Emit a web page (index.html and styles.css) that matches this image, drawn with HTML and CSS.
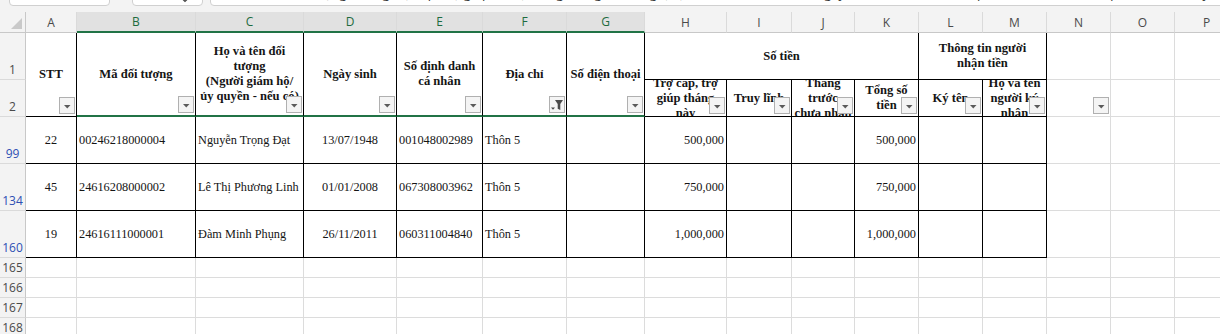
FILE: index.html
```html
<!doctype html>
<html>
<head>
  <meta charset="utf-8">
  <link rel="stylesheet" href="styles.css">
</head>
<body>
  <div class="toolbar">
    <div class="box namebox"></div>
    <div class="box fxbox">
      <svg width="8" height="6" viewBox="0 0 8 6"><path d="M1 1.5 L4 4.5 L7 1.5" fill="none" stroke="#444" stroke-width="1.2"/></svg>
    </div>
    <div class="box formula">Danh sách đối tượng hưởng trợ cấp, trợ giúp xã hội hàng tháng (theo Nghị định số 20/2021/NĐ-CP ngày 15/3/2021 của Chính phủ) - Thôn 5, chi trả qua tài khoản (kỳ tháng 10, 11 năm 2024)</div>
  </div>

  <div class="sheet">
    <div class="corner"><svg width="26" height="20" viewBox="0 0 26 20"><path d="M22 6 V17 H11 Z" fill="#c9c9c9"/></svg></div>
    <div class="colhead">A</div>
    <div class="colhead sel">B</div>
    <div class="colhead sel">C</div>
    <div class="colhead sel">D</div>
    <div class="colhead sel">E</div>
    <div class="colhead sel">F</div>
    <div class="colhead sel">G</div>
    <div class="colhead">H</div>
    <div class="colhead">I</div>
    <div class="colhead">J</div>
    <div class="colhead">K</div>
    <div class="colhead">L</div>
    <div class="colhead">M</div>
    <div class="colhead">N</div>
    <div class="colhead">O</div>
    <div class="colhead">P</div>

    <!-- row 1 -->
    <div class="rowhead">1</div>
    <div class="c t h r2"><span>STT</span><span class="drop"><svg width="14" height="15" viewBox="0 0 14 15"><path d="M4 7 H10.5 L7.25 10.5 Z" fill="#5a5a5a"/></svg></span></div>
    <div class="c t h r2 sb"><span>Mã đối tượng</span><span class="drop"><svg width="14" height="15" viewBox="0 0 14 15"><path d="M4 7 H10.5 L7.25 10.5 Z" fill="#5a5a5a"/></svg></span></div>
    <div class="c t h r2 sb"><span>Họ và tên đối<br>tượng<br>(Người giám hộ/<br>ủy quyền - nếu có)</span><span class="drop"><svg width="14" height="15" viewBox="0 0 14 15"><path d="M4 7 H10.5 L7.25 10.5 Z" fill="#5a5a5a"/></svg></span></div>
    <div class="c t h r2 sb"><span>Ngày sinh</span><span class="drop"><svg width="14" height="15" viewBox="0 0 14 15"><path d="M4 7 H10.5 L7.25 10.5 Z" fill="#5a5a5a"/></svg></span></div>
    <div class="c t h r2 sb"><span>Số định danh<br>cá nhân</span><span class="drop"><svg width="14" height="15" viewBox="0 0 14 15"><path d="M4 7 H10.5 L7.25 10.5 Z" fill="#5a5a5a"/></svg></span></div>
    <div class="c t h r2 sb"><span>Địa chỉ</span><span class="drop"><svg width="14" height="15" viewBox="0 0 14 15"><path d="M5 3 H13 L10.3 7 V13 L7.7 11.7 V7 Z" fill="#4a4a4a"/><path d="M1 10.5 H5 L3 12.7 Z" fill="#4a4a4a"/></svg></span></div>
    <div class="c t h r2 sb nw"><span>Số điện thoại</span><span class="drop"><svg width="14" height="15" viewBox="0 0 14 15"><path d="M4 7 H10.5 L7.25 10.5 Z" fill="#5a5a5a"/></svg></span></div>
    <div class="c t h s4"><span>Số tiền</span></div>
    <div class="c t h s2"><span>Thông tin người<br>nhận tiền</span></div>
    <div class="c"></div>
    <div class="c"></div>
    <div class="c"></div>

    <!-- row 2 -->
    <div class="rowhead">2</div>
    <div class="c t h"><span>Trợ cấp, trợ<br>giúp tháng<br>này</span><span class="drop"><svg width="14" height="15" viewBox="0 0 14 15"><path d="M4 7 H10.5 L7.25 10.5 Z" fill="#5a5a5a"/></svg></span></div>
    <div class="c t h nw"><span>Truy lĩnh</span><span class="drop"><svg width="14" height="15" viewBox="0 0 14 15"><path d="M4 7 H10.5 L7.25 10.5 Z" fill="#5a5a5a"/></svg></span></div>
    <div class="c t h"><span>Tháng<br>trước<br>chưa nhận</span><span class="drop"><svg width="14" height="15" viewBox="0 0 14 15"><path d="M4 7 H10.5 L7.25 10.5 Z" fill="#5a5a5a"/></svg></span></div>
    <div class="c t h"><span>Tổng số<br>tiền</span><span class="drop"><svg width="14" height="15" viewBox="0 0 14 15"><path d="M4 7 H10.5 L7.25 10.5 Z" fill="#5a5a5a"/></svg></span></div>
    <div class="c t h nw"><span>Ký tên</span><span class="drop"><svg width="14" height="15" viewBox="0 0 14 15"><path d="M4 7 H10.5 L7.25 10.5 Z" fill="#5a5a5a"/></svg></span></div>
    <div class="c t h"><span>Họ và tên<br>người ký<br>nhận</span><span class="drop"><svg width="14" height="15" viewBox="0 0 14 15"><path d="M4 7 H10.5 L7.25 10.5 Z" fill="#5a5a5a"/></svg></span></div>
    <div class="c"><span class="drop"><svg width="14" height="15" viewBox="0 0 14 15"><path d="M4 7 H10.5 L7.25 10.5 Z" fill="#5a5a5a"/></svg></span></div>
    <div class="c"></div>
    <div class="c"></div>

    <!-- row 99 -->
    <div class="rowhead filt">99</div>
    <div class="c t ctr">22</div>
    <div class="c t">00246218000004</div>
    <div class="c t">Nguyễn Trọng Đạt</div>
    <div class="c t ctr">13/07/1948</div>
    <div class="c t">001048002989</div>
    <div class="c t">Thôn 5</div>
    <div class="c t"></div>
    <div class="c t num">500,000</div>
    <div class="c t"></div>
    <div class="c t"></div>
    <div class="c t num">500,000</div>
    <div class="c t"></div>
    <div class="c t"></div>
    <div class="c"></div>
    <div class="c"></div>
    <div class="c"></div>

    <!-- row 134 -->
    <div class="rowhead filt">134</div>
    <div class="c t ctr">45</div>
    <div class="c t">24616208000002</div>
    <div class="c t">Lê Thị Phương Linh</div>
    <div class="c t ctr">01/01/2008</div>
    <div class="c t">067308003962</div>
    <div class="c t">Thôn 5</div>
    <div class="c t"></div>
    <div class="c t num">750,000</div>
    <div class="c t"></div>
    <div class="c t"></div>
    <div class="c t num">750,000</div>
    <div class="c t"></div>
    <div class="c t"></div>
    <div class="c"></div>
    <div class="c"></div>
    <div class="c"></div>

    <!-- row 160 -->
    <div class="rowhead filt">160</div>
    <div class="c t ctr">19</div>
    <div class="c t">24616111000001</div>
    <div class="c t">Đàm Minh Phụng</div>
    <div class="c t ctr">26/11/2011</div>
    <div class="c t">060311004840</div>
    <div class="c t">Thôn 5</div>
    <div class="c t"></div>
    <div class="c t num">1,000,000</div>
    <div class="c t"></div>
    <div class="c t"></div>
    <div class="c t num">1,000,000</div>
    <div class="c t"></div>
    <div class="c t"></div>
    <div class="c"></div>
    <div class="c"></div>
    <div class="c"></div>

    <!-- empty rows -->
    <div class="rowhead">165</div>
    <div class="c"></div><div class="c"></div><div class="c"></div><div class="c"></div>
    <div class="c"></div><div class="c"></div><div class="c"></div><div class="c"></div>
    <div class="c"></div><div class="c"></div><div class="c"></div><div class="c"></div>
    <div class="c"></div><div class="c"></div><div class="c"></div><div class="c"></div>

    <div class="rowhead">166</div>
    <div class="c"></div><div class="c"></div><div class="c"></div><div class="c"></div>
    <div class="c"></div><div class="c"></div><div class="c"></div><div class="c"></div>
    <div class="c"></div><div class="c"></div><div class="c"></div><div class="c"></div>
    <div class="c"></div><div class="c"></div><div class="c"></div><div class="c"></div>

    <div class="rowhead">167</div>
    <div class="c"></div><div class="c"></div><div class="c"></div><div class="c"></div>
    <div class="c"></div><div class="c"></div><div class="c"></div><div class="c"></div>
    <div class="c"></div><div class="c"></div><div class="c"></div><div class="c"></div>
    <div class="c"></div><div class="c"></div><div class="c"></div><div class="c"></div>

    <div class="rowhead">168</div>
    <div class="c"></div><div class="c"></div><div class="c"></div><div class="c"></div>
    <div class="c"></div><div class="c"></div><div class="c"></div><div class="c"></div>
    <div class="c"></div><div class="c"></div><div class="c"></div><div class="c"></div>
    <div class="c"></div><div class="c"></div><div class="c"></div><div class="c"></div>
  </div>
</body>
</html>
```

FILE: styles.css
```css
html, body {
  height: 100%;
  margin: 0;
  overflow: hidden;
  background: #fff;
  font-family: "Liberation Serif", serif;
}

/* formula bar, only its lower edge is on screen */
.toolbar {
  display: flex;
  align-items: flex-end;
  height: 12px;
  overflow: hidden;
  background: #f3f3f3;
}
.box {
  box-sizing: border-box;
  height: 22px;
  margin-bottom: 6px;
  background: #fff;
  border: 1px solid #d0d0d0;
  border-radius: 4px;
}
.namebox {
  margin-left: 9px;
  width: 101px;
}
.fxbox {
  display: flex;
  justify-content: flex-end;
  align-items: flex-end;
  margin-left: 22px;
  width: 71px;
  padding: 0 13px 2px 0;
}
.formula {
  flex: 1;
  margin: 0 -40px 6px 7px;
  padding: 0 0 0 10px;
  overflow: hidden;
  white-space: nowrap;
  font: 13px/17px "Open Sans", sans-serif;
  color: #333;
}

/* sheet grid */
.sheet {
  display: grid;
  grid-template-columns: 26px 51px 119px 108px 93px 86px 84px 78px 82px 65px 63px 64px 64px 64px 64px 64px 64px;
  grid-template-rows: 21px 47px 37px 47px 47px 47px 20px 20px 20px 20px;
  width: 1239px;
}
.sheet > div {
  box-sizing: border-box;
  position: relative;
  min-width: 0;
  overflow: hidden;
  border-right: 1px solid #dcdcdc;
  border-bottom: 1px solid #dcdcdc;
}

.corner {
  background: #f3f3f3;
  border-right-color: #c8c8c8 !important;
  border-bottom-color: #c8c8c8 !important;
}
.corner svg {
  display: block;
}

.colhead {
  display: flex;
  align-items: center;
  justify-content: center;
  background: #f3f3f3;
  font: 12px "Open Sans", sans-serif;
  color: #4a4a4a;
  border-right-color: #dadada !important;
  border-bottom-color: #c8c8c8 !important;
}
.colhead.sel {
  background: #e1e1e1;
  color: #1d6b3e;
  border-bottom: 2px solid #217346 !important;
}

.rowhead {
  display: flex;
  align-items: flex-end;
  justify-content: center;
  padding-bottom: 1px;
  background: #f3f3f3;
  font: 12px/16px "Open Sans", sans-serif;
  color: #4a4a4a;
  border-right-color: #c8c8c8 !important;
  border-bottom-color: #dadada !important;
}
.rowhead.filt {
  color: #2d4fb3;
}

/* cells */
.c {
  display: flex;
  align-items: center;
  padding: 0 2px;
  font-size: 12.3px;
  color: #151515;
  white-space: nowrap;
}
.c.t {
  border-right-color: #000;
  border-bottom-color: #000;
}
.c.sb {
  border-bottom: 2px solid #217346;
}
.h {
  justify-content: center;
  text-align: center;
  font-size: 12.6px;
  font-weight: bold;
  line-height: 15px;
  white-space: nowrap;
}
.nw {
  white-space: nowrap;
}
.ctr {
  justify-content: center;
}
.num {
  justify-content: flex-end;
}
.r2 {
  grid-row: span 2;
}
.s4 {
  grid-column: span 4;
}
.s2 {
  grid-column: span 2;
}

/* autofilter buttons */
.drop {
  position: absolute;
  right: 1px;
  bottom: 2px;
  box-sizing: border-box;
  width: 16px;
  height: 17px;
  background: #f4f4f4;
  border: 1px solid #b0b0b0;
}
.drop svg {
  display: block;
}
```
